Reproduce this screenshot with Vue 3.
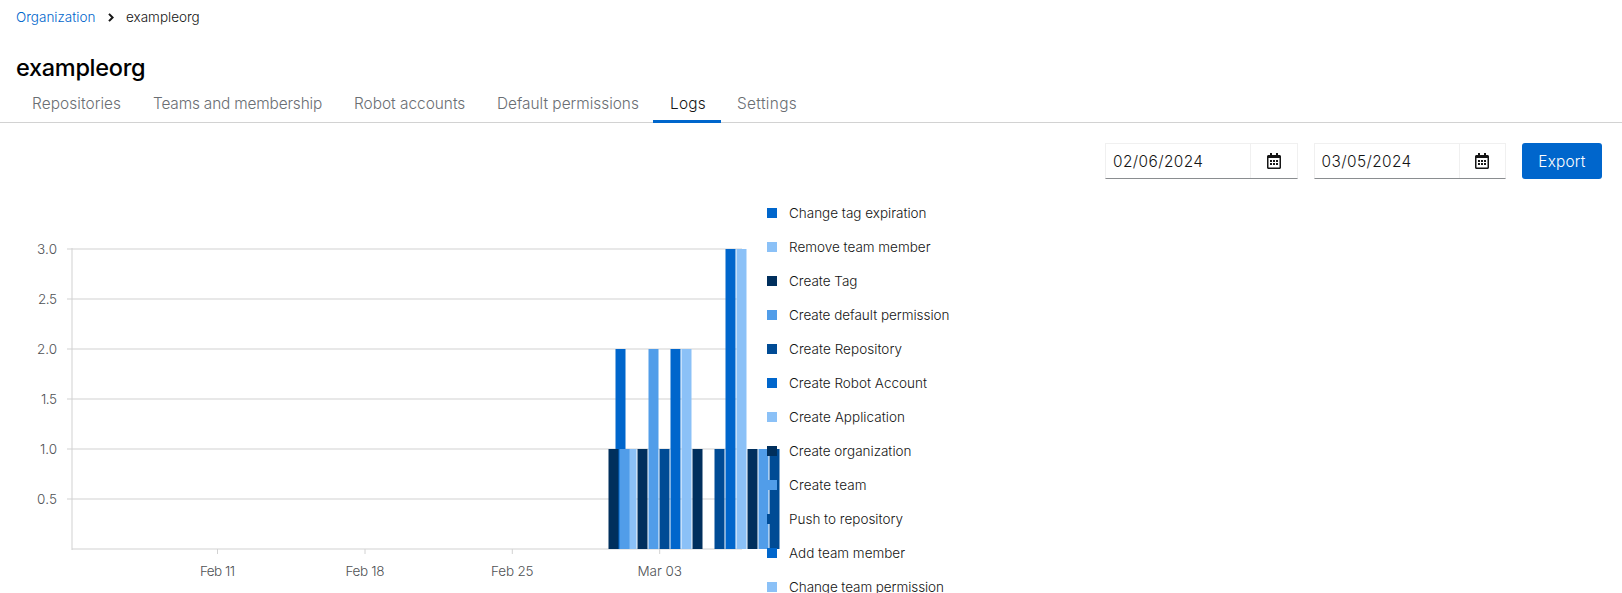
<script setup>
const tabs = [
  { label: 'Repositories', key: 'repositories' },
  { label: 'Teams and membership', key: 'teams' },
  { label: 'Robot accounts', key: 'robots' },
  { label: 'Default permissions', key: 'permissions' },
  { label: 'Logs', key: 'logs' },
  { label: 'Settings', key: 'settings' },
]
const activeTab = 'logs'

const dates = ['02/06/2024', '03/05/2024']

const blue = '#0066cc'
const light = '#8bc1f7'
const navy = '#002f5d'
const mid = '#519de9'
const deep = '#004b95'

const baseY = 549
const unit = 100

const yTicks = [
  { label: '3.0', value: 3, width: 20 },
  { label: '2.5', value: 2.5, width: 19 },
  { label: '2.0', value: 2, width: 20 },
  { label: '1.5', value: 1.5, width: 16 },
  { label: '1.0', value: 1, width: 17 },
  { label: '0.5', value: 0.5, width: 20 },
]
const xTicks = [
  { label: 'Feb 11', x: 217.5, width: 35 },
  { label: 'Feb 18', x: 365, width: 39 },
  { label: 'Feb 25', x: 512.3, width: 42.5 },
  { label: 'Mar 03', x: 659.7, width: 44.5 },
]
const bars = [
  { x: 626.5, value: 1, color: light },
  { x: 615.5, value: 2, color: blue },
  { x: 608.5, value: 1, color: navy },
  { x: 619.5, value: 1, color: mid },
  { x: 637.5, value: 1, color: navy },
  { x: 648.5, value: 2, color: mid },
  { x: 659.5, value: 1, color: deep },
  { x: 670.5, value: 2, color: blue },
  { x: 681.5, value: 2, color: light },
  { x: 692.5, value: 1, color: navy },
  { x: 714.5, value: 1, color: deep },
  { x: 725.5, value: 3, color: blue },
  { x: 736.5, value: 3, color: light },
  { x: 747.5, value: 1, color: navy },
  { x: 758.5, value: 1, color: mid },
  { x: 769.5, value: 1, color: deep },
]
const legend = [
  { label: 'Change tag expiration', color: blue, width: 137.5 },
  { label: 'Remove team member', color: light, width: 141.5 },
  { label: 'Create Tag', color: navy, width: 68.5 },
  { label: 'Create default permission', color: mid, width: 160.5 },
  { label: 'Create Repository', color: deep, width: 113 },
  { label: 'Create Robot Account', color: blue, width: 138 },
  { label: 'Create Application', color: light, width: 116 },
  { label: 'Create organization', color: navy, width: 122.5 },
  { label: 'Create team', color: mid, width: 77.5 },
  { label: 'Push to repository', color: deep, width: 114 },
  { label: 'Add team member', color: blue, width: 116 },
  { label: 'Change team permission', color: light, width: 155 },
]
</script>

<template>
  <div class="page">
    <nav class="breadcrumb">
      <a class="crumb-link">Organization</a>
      <svg class="chevron" width="6" height="9" viewBox="0 0 6 9">
        <path d="M1 0.9 L4.6 4.5 L1 8.1" fill="none" stroke="#151515" stroke-width="2" />
      </svg>
      <span>exampleorg</span>
    </nav>

    <h1 class="title">exampleorg</h1>

    <div class="tabs">
      <div
        v-for="tab in tabs"
        :key="tab.key"
        class="tab"
        :class="[tab.key, { active: tab.key === activeTab }]"
      >
        <span>{{ tab.label }}</span>
      </div>
    </div>

    <div class="toolbar">
      <div v-for="date in dates" :key="date" class="date">
        <div class="date-text"><span>{{ date }}</span></div>
        <div class="date-button">
          <svg width="14" height="16" viewBox="0 0 448 512">
            <path
              fill="#151515"
              d="M148 288h-40c-6.600 0-12-5.400-12-12v-40c0-6.600 5.400-12 12-12h40c6.600 0 12 5.400 12 12v40c0 6.600-5.400 12-12 12zm108-12v-40c0-6.600-5.400-12-12-12h-40c-6.600 0-12 5.400-12 12v40c0 6.600 5.400 12 12 12h40c6.600 0 12-5.400 12-12zm96 0v-40c0-6.600-5.400-12-12-12h-40c-6.600 0-12 5.400-12 12v40c0 6.600 5.400 12 12 12h40c6.600 0 12-5.400 12-12zm-96 96v-40c0-6.600-5.400-12-12-12h-40c-6.600 0-12 5.400-12 12v40c0 6.600 5.400 12 12 12h40c6.600 0 12-5.400 12-12zm-96 0v-40c0-6.600-5.400-12-12-12h-40c-6.600 0-12 5.400-12 12v40c0 6.600 5.400 12 12 12h40c6.600 0 12-5.400 12-12zm192 0v-40c0-6.600-5.400-12-12-12h-40c-6.600 0-12 5.400-12 12v40c0 6.600 5.400 12 12 12h40c6.600 0 12-5.400 12-12zm96-260v352c0 26.500-21.500 48-48 48H48c-26.500 0-48-21.500-48-48V112c0-26.500 21.500-48 48-48h48V12c0-6.600 5.400-12 12-12h40c6.600 0 12 5.400 12 12v52h128V12c0-6.600 5.400-12 12-12h40c6.600 0 12 5.400 12 12v52h48c26.500 0 48 21.500 48 48zm-48 346V160H48v298c0 3.300 2.700 6 6 6h340c3.300 0 6-2.700 6-6z"
            />
          </svg>
        </div>
      </div>
      <button class="export">Export</button>
    </div>

    <svg class="chart" width="1622" height="414" viewBox="0 179 1622 414">
      <g stroke="#d2d2d2" stroke-opacity="0.5" stroke-width="2">
        <line v-for="t in yTicks" :key="t.label" x1="67" x2="742" :y1="baseY - t.value * unit" :y2="baseY - t.value * unit" />
        <line x1="72" x2="742" :y1="baseY" :y2="baseY" />
        <line x1="72" x2="72" y1="248" y2="550" />
      </g>
      <g stroke="#d2d2d2" stroke-width="1">
        <line v-for="t in xTicks" :key="t.label" :x1="t.x" :x2="t.x" y1="549" y2="554" />
      </g>
      <g class="axis-label">
        <text v-for="t in yTicks" :key="t.label" :x="57 - t.width" :y="baseY - t.value * unit + 5" :textLength="t.width">{{ t.label }}</text>
        <text v-for="t in xTicks" :key="t.label" :x="t.x - t.width / 2" y="576" :textLength="t.width">{{ t.label }}</text>
      </g>
      <rect
        v-for="bar in bars"
        :key="bar.x"
        :x="bar.x"
        :y="baseY - bar.value * unit"
        width="10"
        :height="bar.value * unit"
        :fill="bar.color"
      />
      <g v-for="(item, i) in legend" :key="item.label">
        <rect x="767" :y="208 + i * 34" width="10" height="10" :fill="item.color" />
        <text class="legend-label" x="789" :y="218 + i * 34" :textLength="item.width">{{ item.label }}</text>
      </g>
    </svg>
  </div>
</template>

<style>
body {
  margin: 0;
  background: #fff;
  overflow: hidden;
}
</style>

<style scoped>
.page {
  width: 1622px;
  height: 593px;
  overflow: hidden;
  font-family: Inter, "Liberation Sans", sans-serif;
  color: #151515;
}
.breadcrumb {
  display: flex;
  align-items: center;
  height: 34px;
  padding-left: 16px;
  font-size: 13.5px;
  font-weight: 300;
}
.crumb-link {
  width: 80px;
  color: #0066cc;
}
.chevron {
  margin: 0 12px;
}
.title {
  margin: 17px 0 0;
  padding-left: 16px;
  height: 34px;
  line-height: 34px;
  font-size: 23.5px;
  font-weight: 500;
  letter-spacing: -0.3px;
  color: #000;
}
.tabs {
  display: flex;
  height: 37px;
  padding-left: 16px;
  border-bottom: 1px solid #d2d2d2;
}
.tab {
  box-sizing: border-box;
  height: 38px;
  padding-left: 16px;
  font-size: 15.4px;
  line-height: 37px;
  font-weight: 300;
  color: #6a6e73;
  white-space: nowrap;
}
.repositories {
  width: 121px;
  letter-spacing: 0.08px;
}
.teams {
  width: 201px;
  letter-spacing: -0.16px;
}
.robots {
  width: 143px;
}
.permissions {
  width: 172px;
}
.logs {
  width: 68px;
  padding-left: 17px;
  letter-spacing: 0.2px;
}
.settings {
  width: 92px;
  letter-spacing: 0.35px;
}
.active {
  color: #151515;
  border-bottom: 3px solid #0066cc;
}
.toolbar {
  display: flex;
  justify-content: flex-end;
  gap: 16px;
  height: 36px;
  margin-top: 20px;
  padding-right: 20px;
}
.date {
  box-sizing: border-box;
  display: flex;
  width: 192.500px;
  height: 36px;
  border: 1px solid #f0f0f0;
  border-bottom-color: #8a8d90;
}
.date-text {
  box-sizing: border-box;
  width: 145px;
  padding-left: 7px;
  border-right: 1px solid #f0f0f0;
  font-size: 15.4px;
  line-height: 35px;
  font-weight: 300;
  letter-spacing: 0.42px;
}
.date-button {
  flex: 1;
  display: flex;
  align-items: center;
  justify-content: center;
}
.export {
  width: 80px;
  height: 36px;
  padding: 0;
  border: 0;
  border-radius: 3px;
  background: #0066cc;
  color: #fff;
  font-family: inherit;
  font-size: 15.4px;
  font-weight: 300;
  letter-spacing: 0.2px;
}
.chart {
  display: block;
}
.axis-label {
  font-size: 13.5px;
  font-weight: 300;
  fill: #4f5255;
}
.legend-label {
  font-size: 13.5px;
  font-weight: 300;
  fill: #151515;
}
</style>
